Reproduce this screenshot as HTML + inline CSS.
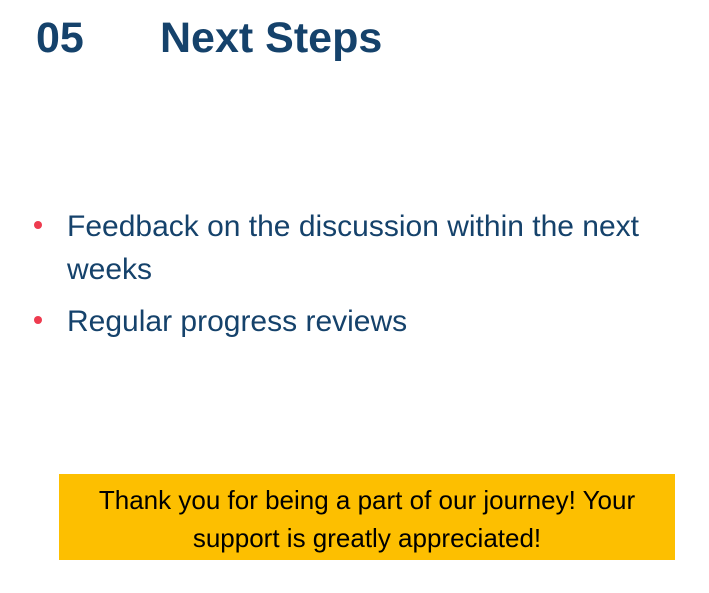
<!DOCTYPE html>
<html><head><style>
body{margin:0;width:709px;height:593px;background:#fff;font-family:"Liberation Sans",sans-serif;position:relative;overflow:hidden}
.t{position:absolute;top:12px;font-size:43px;font-weight:bold;color:#15426b;line-height:52px}
.b{position:absolute;left:67px;font-size:30px;color:#15426b;line-height:43px;white-space:nowrap}
.d{position:absolute;left:34px;width:8px;height:8px;border-radius:50%;background:#ee3b4f}
.y{position:absolute;left:59px;top:474px;width:616px;height:86px;background:#fdbf00;color:#000;font-size:26px;line-height:38px;text-align:center;padding-top:7px;box-sizing:border-box;white-space:nowrap}
</style></head><body>
<div class="t" style="left:36px">05</div>
<div class="t" style="left:160px">Next Steps</div>
<div class="d" style="top:221px"></div>
<div class="b" style="top:205px">Feedback on the discussion within the next<br>weeks</div>
<div class="d" style="top:316px"></div>
<div class="b" style="top:300px">Regular progress reviews</div>
<div class="y">Thank you for being a part of our journey! Your<br>support is greatly appreciated!</div>
</body></html>
